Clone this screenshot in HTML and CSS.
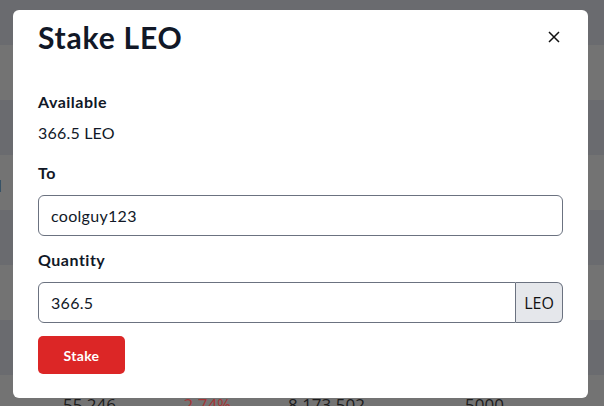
FILE: index.html
```html
<!DOCTYPE html>
<html lang="en">
<head>
<meta charset="utf-8">
<title>Stake LEO</title>
<link rel="stylesheet" href="styles.css">
</head>
<body>
<div class="page">
  <div class="row row-dark row-head"></div>
  <div class="row row-light"></div>
  <div class="row row-dark"></div>
  <div class="row row-light"><span class="cut">1 233</span></div>
  <div class="row row-dark"></div>
  <div class="row row-light"></div>
  <div class="row row-dark"></div>
  <div class="row row-light row-last">
    <span class="cell c1">55 246</span>
    <span class="cell c2 neg">-2.74%</span>
    <span class="cell c3">8 173 502</span>
    <span class="cell c4">5000</span>
  </div>
</div>

<div class="modal" role="dialog" aria-labelledby="title">
  <div class="modal-header">
    <h2 id="title" class="modal-title">Stake LEO</h2>
    <button class="close" aria-label="Close">
      <svg width="12" height="12" viewBox="0 0 12 12"><path d="M1 1 L11 11 M11 1 L1 11" stroke="#111" stroke-width="1.5" fill="none"/></svg>
    </button>
  </div>
  <div class="modal-body">
    <div class="label label-avail">Available</div>
    <div class="value">366.5 LEO</div>
    <label class="label label-to" for="to">To</label>
    <input id="to" class="field" type="text" value="coolguy123">
    <label class="label label-qty" for="qty">Quantity</label>
    <div class="group">
      <input id="qty" class="field field-group" type="text" value="366.5">
      <span class="addon">LEO</span>
    </div>
    <button class="btn">Stake</button>
  </div>
</div>
</body>
</html>
```
FILE: styles.css
```css
* { box-sizing: border-box; }
html, body { margin: 0; padding: 0; }
body {
  width: 604px;
  height: 406px;
  overflow: hidden;
  font-family: Lato, "Noto Sans", sans-serif;
  color: #111827;
  background: #737373;
}
.page { display: flex; flex-direction: column; height: 406px; overflow: hidden; }
.row { height: 55px; display: flex; align-items: flex-start; flex-shrink: 0; }
.row-head { height: 45px; }
.row-dark { background: #6a6b6f; }
.row-light { background: #737373; }
.cut {
  width: 4px;
  direction: rtl;
  white-space: nowrap;
  font-family: "Open Sans", sans-serif;
  font-size: 16px;
  line-height: 20px;
  margin-top: 21px;
  color: #222;
}
.row-last { height: 31px; overflow: hidden; font-family: "Open Sans", sans-serif; font-size: 17px; color: #1c1c1c; }
.cell { display: block; margin-top: 18px; white-space: nowrap; }
.c1 { margin-left: 63px; width: 115px; }
.c2 { width: 110px; }
.c3 { width: 177px; }
.neg { color: #a33636; }

.modal {
  position: fixed;
  left: 13px;
  top: 10px;
  width: 575px;
  height: 388px;
  background: #fff;
  border-radius: 6px;
  padding: 0 25px 25px;
}
.modal-header {
  display: flex;
  justify-content: space-between;
  align-items: center;
  padding-top: 9px;
}
.modal-title {
  margin: 0;
  font-size: 30px;
  line-height: 36px;
  font-weight: 700;
  letter-spacing: 0.8px;
  color: #111827;
}
.close {
  border: 0;
  background: none;
  padding: 0;
  width: 12px;
  height: 12px;
  margin-right: 3px;
  display: flex;
}
.modal-body { padding-top: 35px; display: flex; flex-direction: column; align-items: flex-start; }
.label { display: block; font-weight: 700; font-size: 16px; line-height: 24px; letter-spacing: 0.5px; color: #111827; }
.value { font-size: 16px; line-height: 24px; margin-top: 7px; letter-spacing: 0.2px; color: #111827; }
.label-to { margin-top: 16px; }
.label-qty { margin-top: 12px; }
.field {
  margin-top: 10px;
  width: 100%;
  height: 41px;
  border: 1px solid #6b7280;
  border-radius: 6px;
  padding: 0 12px;
  font-family: Lato, "Noto Sans", sans-serif;
  font-size: 16px;
  letter-spacing: 0.3px;
  color: #111827;
  background: #fff;
  outline: none;
}
.group { display: flex; width: 100%; margin-top: 10px; height: 41px; }
.field-group { margin-top: 0; height: 41px; flex: 1; border-radius: 6px 0 0 6px; }
.addon {
  width: 47px;
  border: 1px solid #6b7280;
  border-left: 0;
  border-radius: 0 6px 6px 0;
  background: #e5e7eb;
  display: flex;
  align-items: center;
  justify-content: center;
  font-family: "Open Sans", sans-serif;
  font-size: 16px;
  color: #111;
}
.btn {
  margin-top: 13px;
  width: 87px;
  height: 38px;
  border: 0;
  border-radius: 5px;
  background: #dc2626;
  color: #fff;
  font-family: Lato, "Noto Sans", sans-serif;
  font-weight: 700;
  font-size: 14px;
  letter-spacing: 0.3px;
}
```
